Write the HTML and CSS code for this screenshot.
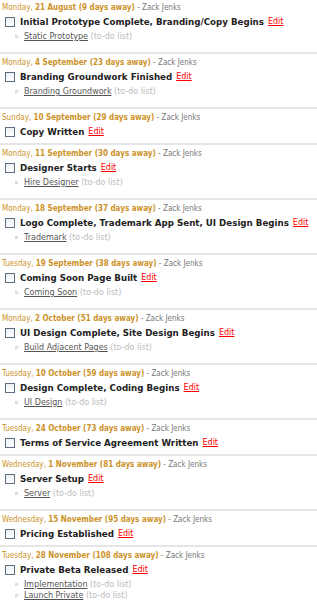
FILE: index.html
```html
<!DOCTYPE html>
<html lang="en">
<head>
    <meta charset="UTF-8">
    <meta name="viewport" content="width=device-width, initial-scale=1.0">
    <title>Milestones</title>
    <link rel="stylesheet" href="styles.css">
</head>
<body>
    <ul class="milestones">
        <li class="milestone">
            <div class="meta"><span class="date">Monday, <b>21 August (9 days away)</b></span> - Zack Jenks</div>
            <h3 class="title"><span class="check"></span>Initial Prototype Complete, Branding/Copy Begins <a href="#" class="edit">Edit</a></h3>
            <ul class="lists">
                <li><a href="#">Static Prototype</a> <span class="kind">(to-do list)</span></li>
            </ul>
        </li>
        <li class="milestone">
            <div class="meta"><span class="date">Monday, <b>4 September (23 days away)</b></span> - Zack Jenks</div>
            <h3 class="title"><span class="check"></span>Branding Groundwork Finished <a href="#" class="edit">Edit</a></h3>
            <ul class="lists">
                <li><a href="#">Branding Groundwork</a> <span class="kind">(to-do list)</span></li>
            </ul>
        </li>
        <li class="milestone">
            <div class="meta"><span class="date">Sunday, <b>10 September (29 days away)</b></span> - Zack Jenks</div>
            <h3 class="title"><span class="check"></span>Copy Written <a href="#" class="edit">Edit</a></h3>
        </li>
        <li class="milestone">
            <div class="meta"><span class="date">Monday, <b>11 September (30 days away)</b></span> - Zack Jenks</div>
            <h3 class="title"><span class="check"></span>Designer Starts <a href="#" class="edit">Edit</a></h3>
            <ul class="lists">
                <li><a href="#">Hire Designer</a> <span class="kind">(to-do list)</span></li>
            </ul>
        </li>
        <li class="milestone">
            <div class="meta"><span class="date">Monday, <b>18 September (37 days away)</b></span> - Zack Jenks</div>
            <h3 class="title"><span class="check"></span>Logo Complete, Trademark App Sent, UI Design Begins <a href="#" class="edit">Edit</a></h3>
            <ul class="lists">
                <li><a href="#">Trademark</a> <span class="kind">(to-do list)</span></li>
            </ul>
        </li>
        <li class="milestone">
            <div class="meta"><span class="date">Tuesday, <b>19 September (38 days away)</b></span> - Zack Jenks</div>
            <h3 class="title"><span class="check"></span>Coming Soon Page Built <a href="#" class="edit">Edit</a></h3>
            <ul class="lists">
                <li><a href="#">Coming Soon</a> <span class="kind">(to-do list)</span></li>
            </ul>
        </li>
        <li class="milestone">
            <div class="meta"><span class="date">Monday, <b>2 October (51 days away)</b></span> - Zack Jenks</div>
            <h3 class="title"><span class="check"></span>UI Design Complete, Site Design Begins <a href="#" class="edit">Edit</a></h3>
            <ul class="lists">
                <li><a href="#">Build Adjacent Pages</a> <span class="kind">(to-do list)</span></li>
            </ul>
        </li>
        <li class="milestone">
            <div class="meta"><span class="date">Tuesday, <b>10 October (59 days away)</b></span> - Zack Jenks</div>
            <h3 class="title"><span class="check"></span>Design Complete, Coding Begins <a href="#" class="edit">Edit</a></h3>
            <ul class="lists">
                <li><a href="#">UI Design</a> <span class="kind">(to-do list)</span></li>
            </ul>
        </li>
        <li class="milestone">
            <div class="meta"><span class="date">Tuesday, <b>24 October (73 days away)</b></span> - Zack Jenks</div>
            <h3 class="title"><span class="check"></span>Terms of Service Agreement Written <a href="#" class="edit">Edit</a></h3>
        </li>
        <li class="milestone">
            <div class="meta"><span class="date">Wednesday, <b>1 November (81 days away)</b></span> - Zack Jenks</div>
            <h3 class="title"><span class="check"></span>Server Setup <a href="#" class="edit">Edit</a></h3>
            <ul class="lists">
                <li><a href="#">Server</a> <span class="kind">(to-do list)</span></li>
            </ul>
        </li>
        <li class="milestone">
            <div class="meta"><span class="date">Wednesday, <b>15 November (95 days away)</b></span> - Zack Jenks</div>
            <h3 class="title"><span class="check"></span>Pricing Established <a href="#" class="edit">Edit</a></h3>
        </li>
        <li class="milestone">
            <div class="meta"><span class="date">Tuesday, <b>28 November (108 days away)</b></span> - Zack Jenks</div>
            <h3 class="title"><span class="check"></span>Private Beta Released <a href="#" class="edit">Edit</a></h3>
            <ul class="lists">
                <li><a href="#">Implementation</a> <span class="kind">(to-do list)</span></li>
                <li><a href="#">Launch Private</a> <span class="kind">(to-do list)</span></li>
            </ul>
        </li>
    </ul>
</body>
</html>
```

FILE: styles.css
```css
body {
    font-family: "DejaVu Sans", Verdana, sans-serif;
    background-color: #fff;
    color: #222;
    margin: 0;
}
.milestones {
    list-style: none;
    margin: 0;
    padding: 0;
}
.milestone {
    padding: 3px 2px 3px 2px;
    border-bottom: 2px solid #e6e6e6;
}
.milestone:first-child {
    padding-top: 2px;
}
.meta {
    font-size: 8px;
    font-stretch: condensed;
    line-height: 12px;
    color: #777;
    white-space: nowrap;
}
.date {
    color: #cc9229;
}
.title {
    display: flex;
    align-items: center;
    margin: 0;
    font-size: 8.7px;
    line-height: 16px;
    font-weight: bold;
    color: #222;
    white-space: nowrap;
}
.check {
    width: 8px;
    height: 8px;
    margin: 0 5px 0 3px;
    border: 1px solid #5d6d82;
    background: linear-gradient(#eef0f3, #fff);
    flex: none;
}
.edit {
    margin-left: 4px;
    font-size: 8px;
    font-weight: normal;
    color: #f00;
}
.lists {
    list-style: none;
    margin: 1px 0 7px 0;
    padding: 0 0 0 13px;
}
.lists li {
    font-size: 8px;
    line-height: 11px;
    color: #bbb;
    white-space: nowrap;
}
.lists li::before {
    content: "";
    display: inline-block;
    width: 3px;
    height: 3px;
    margin: 0 6px 1px 0;
    background-color: #ddd;
    vertical-align: middle;
}
.lists a {
    color: #555;
}
```
